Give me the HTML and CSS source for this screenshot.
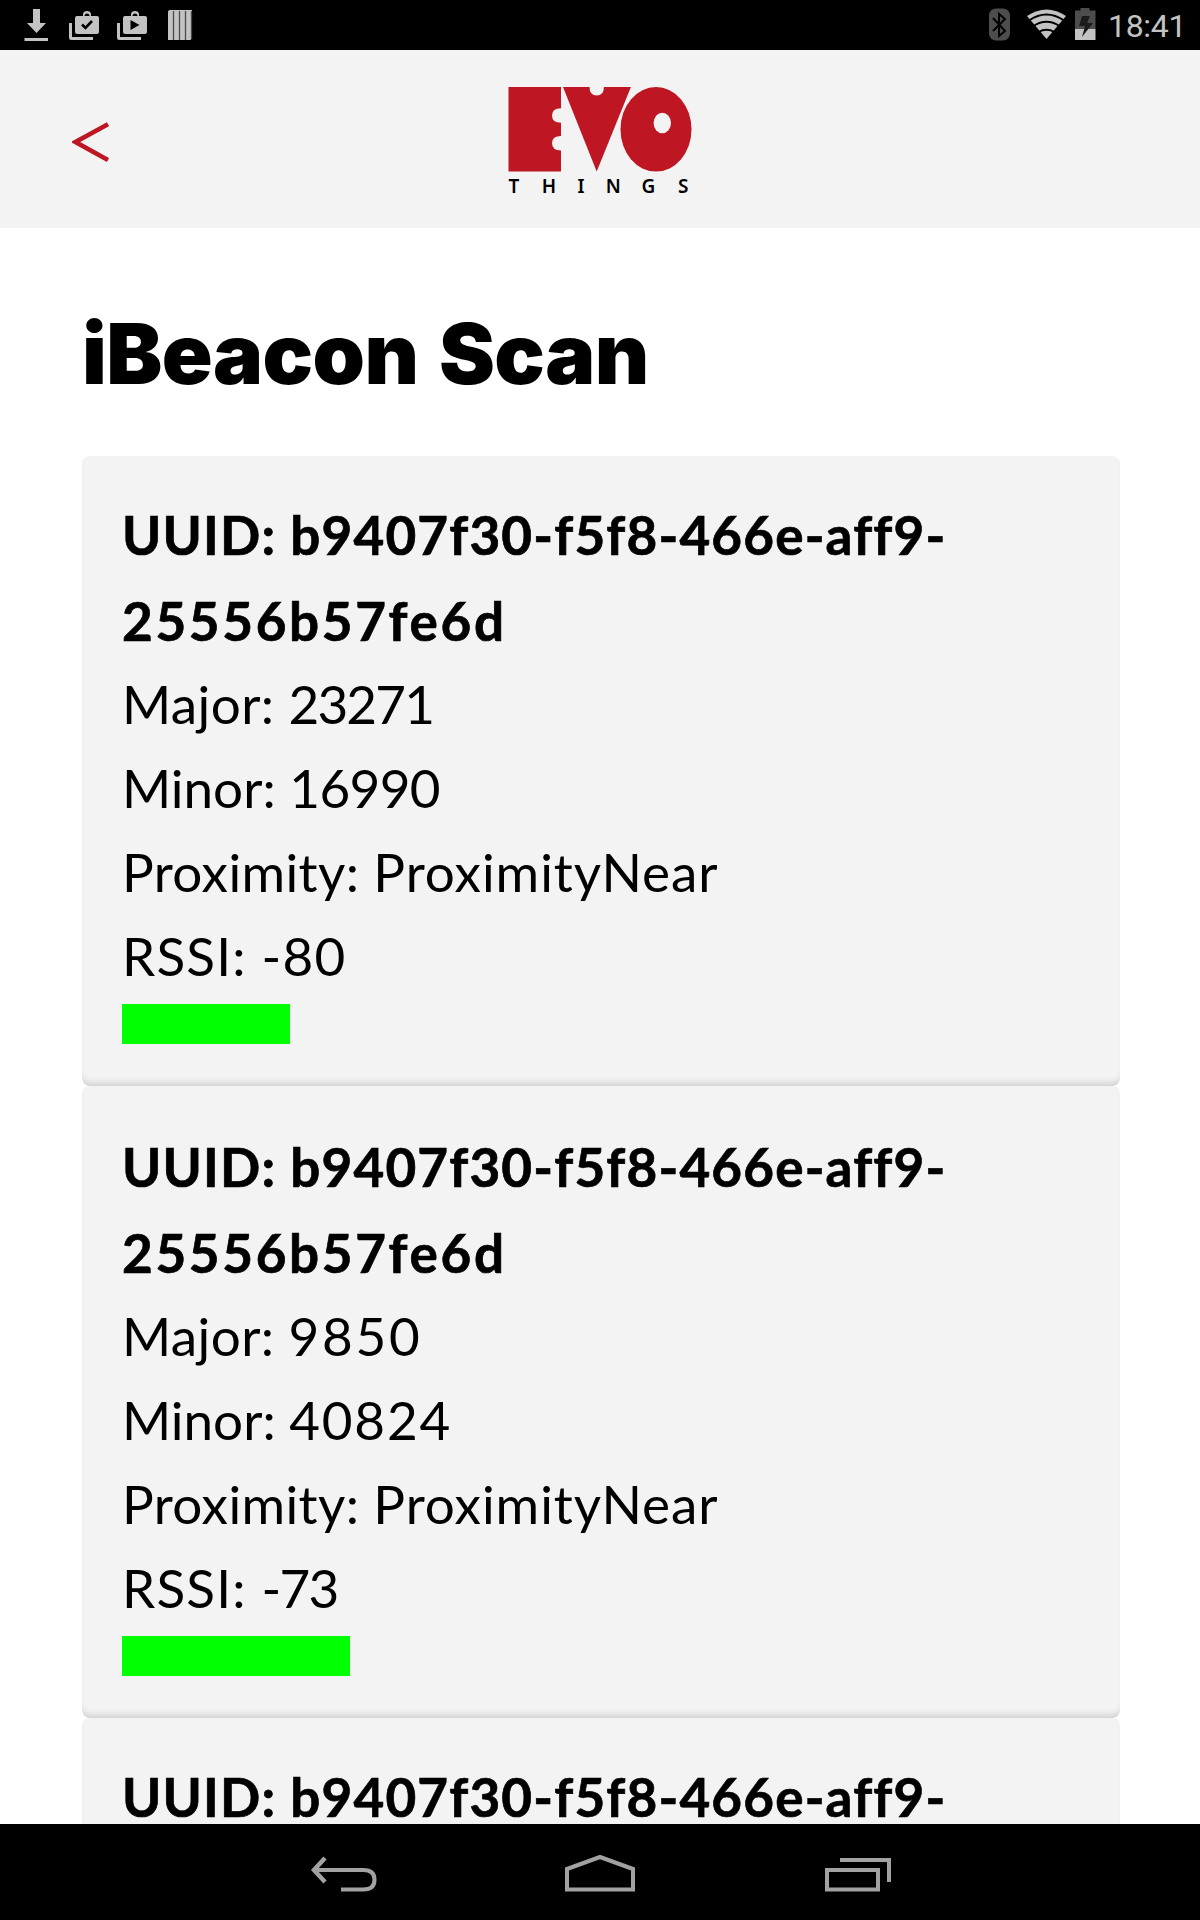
FILE: index.html
```html
<!DOCTYPE html>
<html lang="en">
<head>
<meta charset="utf-8">
<title>iBeacon Scan</title>
<link rel="stylesheet" href="styles.css">
</head>
<body>
<div class="status-bar">
  <svg class="status-left" width="200" height="50" viewBox="0 0 200 50" fill="#c3c3c3">
    <path d="M33 9h7v14h6L36.500 33 27 23h6zM24.500 38h23.500v3h-23.500z"/>
    <g id="bag">
      <path d="M69 23h3v14h21v3H71.500Q69 40 69 37.500z"/>
      <path fill-rule="evenodd" d="M77 16h6v-1.500q0-3.500 4-3.500t4 3.500V16h6q2 0 2 2v13.500q0 2.500-2.500 2.500h-19Q75 34 75 31.500V18q0-2 2-2zM84.500 16h5q0-2.500-2.500-2.500T84.500 16z"/>
    </g>
    <path d="M82 24.500l3.500 3.500 6.500-7" fill="none" stroke="#000" stroke-width="2.600"/>
    <use href="#bag" x="48"/>
    <path d="M130.500 20v10l9-5z" fill="#000"/>
    <path d="M168 12q0-2 2-2h22v28l-1.500 2H168z"/>
    <path d="M173.500 11v29M179.500 11v29M185.500 11v29M191.500 11v28" stroke="#4a4a4a" stroke-width="1.300"/>
  </svg>
  <div class="status-right">
    <svg width="110" height="50" viewBox="0 0 110 50">
      <rect x="3" y="8.500" width="21" height="32" rx="7" fill="#4d4d4d"/>
      <path d="M7 18l12 13-6 5V14l6 5L7 31" fill="none" stroke="#000" stroke-width="2"/>
      <path d="M41 16Q60.500 3 80 16L60.500 39z" fill="#c3c3c3"/>
      <path d="M43 20.500Q60.500 8.500 78 20.500M47.500 26Q60.500 17.500 73.500 26M52.500 32Q60.500 27.500 68.500 32" fill="none" stroke="#000" stroke-width="1.800"/>
      <path d="M89 10.500h5.500V8h9v2.500h6V29H89z" fill="#4d4d4d"/>
      <path d="M89 29h20.500v11H89z" fill="#c3c3c3"/>
      <path d="M96 16h8l-3 7h6l-11 14 3-11h-6z" fill="#1b1b1b"/>
    </svg>
    <span class="clock">18:41</span>
  </div>
</div>
<header class="app-header">
  <svg class="back" width="37" height="42" viewBox="0 0 37 42"><path d="M36 3.200L3.500 21 36 39" fill="none" stroke="#be1622" stroke-width="4.600"/></svg>
  <svg class="logo" width="220" height="130" viewBox="0 0 220 130">
    <g fill="#be1622">
      <path d="M18.500 17H71v21.300q-9 0-9 7.200t9 7.200v13.300q-9 0-9 7.200t9 7.200V101.500H18.500z"/>
      <path d="M73 17h26.500q0 8.500 7.200 8.500t7.200-8.500h27L106.700 101.500z"/>
      <ellipse cx="166" cy="59.300" rx="35.500" ry="42.300"/>
    </g>
    <ellipse cx="172.300" cy="53" rx="8.700" ry="10.300" fill="#f3f3f3"/>
    <g class="logo-text"><text x="18.500" y="123">T</text><text x="51.700" y="123">H</text><text x="87.500" y="123">I</text><text x="115.700" y="123">N</text><text x="151.500" y="123">G</text><text x="188" y="123">S</text></g>
  </svg>
</header>
<main class="page">
  <h1>iBeacon Scan</h1>
  <section class="beacon">
    <strong class="uuid"><span class="uuid-head">UUID: b9407f30-f5f8-466e-aff9-</span><br><span class="uuid-tail">25556b57fe6d</span></strong>
    <p><span class="major">Major: </span><span class="ones">23271</span></p>
    <p>Minor: <span class="tight">16990</span></p>
    <p><span class="major">Proximity: </span><span class="near">ProximityNear</span></p>
    <p class="rssi">RSSI: -80</p>
    <div class="bar" style="width:168px"></div>
  </section>
  <section class="beacon">
    <strong class="uuid"><span class="uuid-head">UUID: b9407f30-f5f8-466e-aff9-</span><br><span class="uuid-tail">25556b57fe6d</span></strong>
    <p><span class="major">Major: </span><span class="wider">9850</span></p>
    <p>Minor: <span class="wide">40824</span></p>
    <p><span class="major">Proximity: </span><span class="near">ProximityNear</span></p>
    <p class="rssi">RSSI: <span class="ones">-73</span></p>
    <div class="bar" style="width:228px"></div>
  </section>
  <section class="beacon">
    <strong class="uuid"><span class="uuid-head">UUID: b9407f30-f5f8-466e-aff9-</span></strong>
  </section>
</main>
<nav class="nav-bar">
  <svg width="1200" height="96" viewBox="0 0 1200 96" fill="none" stroke="#a2a2a2" stroke-width="4">
    <path d="M341 65.500h22.500q11 0 11-9.750t-11-9.750H315"/>
    <path d="M325 34l-11 12 11 12" stroke-width="4.500"/>
    <path d="M567 45v20.500h66V45L600 33z"/>
    <path d="M827 46h51v19.500h-51zM840 36h49v22"/>
  </svg>
</nav>
</body>
</html>
```
FILE: styles.css
```css
* { box-sizing: border-box; }
body { margin: 0; width: 1200px; height: 1920px; overflow: hidden; display: flex; flex-direction: column; background: #fff; color: #000; font-family: Lato, sans-serif; }
svg { display: block; flex: none; }
.status-bar { flex: none; height: 50px; background: #000; display: flex; justify-content: space-between; }
.status-right { display: flex; width: 214px; gap: 12px; }
.clock { font: 32px/52px Roboto, sans-serif; letter-spacing: -.3px; color: #c3c3c3; white-space: nowrap; }
.app-header { flex: none; height: 178px; background: #f3f3f3; display: grid; grid-template-columns: 490px 220px 490px; padding-top: 20px; }
.back { margin: 51px 0 0 72px; }
.logo-text { font: 600 19px "Noto Sans", sans-serif; }
.page { flex: 1; min-height: 0; overflow: hidden; padding: 78px 80px 0 82px; }
h1 { margin: 0; height: 150px; font: 900 84px/96px Inter, sans-serif; letter-spacing: -.6px; word-spacing: 4.500px; white-space: nowrap; }
.beacon { height: 632px; padding: 36px 40px 40px; background: #f3f3f3; border-radius: 8px; box-shadow: inset 0 -7px 8px -6px rgba(0,0,0,.22); white-space: nowrap; font-size: 53px; }
.beacon:nth-of-type(1) { height: 630px; }
.beacon:nth-of-type(2) { padding-top: 38px; }
.uuid { display: block; height: 170px; font-weight: 700; line-height: 86px; -webkit-text-stroke: .7px #000; }
.uuid-head { letter-spacing: 1.18px; }
.uuid-tail { letter-spacing: 2.67px; }
p { margin: 0; line-height: 84px; }
.major { letter-spacing: .4px; }
.ones { letter-spacing: -1.8px; }
.tight { letter-spacing: -.6px; }
.wide { letter-spacing: 1.8px; }
.wider { letter-spacing: 2.8px; }
.near { letter-spacing: .95px; }
.rssi { letter-spacing: 1.2px; }
.bar { height: 40px; margin-top: 6px; background: #0f0; }
.nav-bar { flex: none; height: 96px; background: #000; }
```
